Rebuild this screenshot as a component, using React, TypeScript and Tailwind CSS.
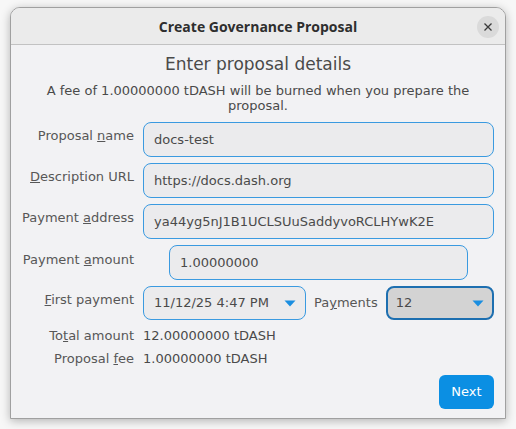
import React from "react";

const font = { fontFamily: '"DejaVu Sans", "Liberation Sans", sans-serif' };

function Caret() {
  return (
    <svg width="12" height="7" viewBox="0 0 12 7" className="shrink-0">
      <path d="M0.5 0.5 L11.5 0.5 L6 6.5 Z" fill="#1a8ee0" />
    </svg>
  );
}

function Label({ children, className = "" }: { children: React.ReactNode; className?: string }) {
  return (
    <div className={"text-right whitespace-nowrap text-[13px] leading-4 text-[#575757] pt-[6px] " + className}>
      {children}
    </div>
  );
}

function Field({ value, className = "" }: { value: string; className?: string }) {
  return (
    <div
      className={
        "h-[35px] flex items-center rounded-[8px] border border-[#3a9ae0] bg-[#ebebed] px-[10px] text-[13px] leading-4 text-[#4a4a4a] " +
        className
      }
    >
      {value}
    </div>
  );
}

export default function App() {
  return (
    <div className="w-[516px] h-[429px] bg-[#f7f7f7] pt-[7px] pl-[10px]" style={font}>
      <div className="w-[496px] h-[412px] flex flex-col rounded-t-[10px] border border-[#a0a0a0] bg-[#f2f2f4] shadow-[0_2px_10px_rgba(0,0,0,0.28)] overflow-hidden">
        <div className="relative h-[37px] shrink-0 flex items-center justify-center border-b border-[#c2c2c2] bg-[#ebebeb]">
          <span className="text-[14px] font-bold text-[#2e2e2e]" style={{ fontFamily: '"Open Sans", "DejaVu Sans", sans-serif' }}>
            Create Governance Proposal
          </span>
          <div className="absolute right-[6px] top-[8px] w-[22px] h-[22px] rounded-full bg-[#dadada] flex items-center justify-center">
            <svg width="10" height="10" viewBox="0 0 10 10">
              <path d="M1.5 1.5 L8.5 8.5 M8.5 1.5 L1.5 8.5" stroke="#3a3a3a" strokeWidth="1.3" />
            </svg>
          </div>
        </div>

        <div className="flex-1 flex flex-col px-[11px]">
          <div className="text-center text-[17px] leading-6 text-[#4a4a4a] mt-[7px]">Enter proposal details</div>
          <div className="text-center text-[13px] leading-[15px] text-[#4a4a4a] mt-[7px] px-[20px]">
            A fee of 1.00000000 tDASH will be burned when you prepare the proposal.
          </div>

          <div className="grid grid-cols-[112px_1fr] gap-x-[9px] gap-y-[6px] mt-[9px]">
            <Label>
              Proposal <u>n</u>ame
            </Label>
            <Field value="docs-test" />

            <Label>
              <u>D</u>escription URL
            </Label>
            <Field value="https://docs.dash.org" />

            <Label>
              Payment <u>a</u>ddress
            </Label>
            <Field value="ya44yg5nJ1B1UCLSUuSaddyvoRCLHYwK2E" />

            <Label className="pt-[7px]">
              Payment <u>a</u>mount
            </Label>
            <Field value="1.00000000" className="ml-[26px] mr-[26px]" />

            <Label className="pt-[6px]">
              <u>F</u>irst payment
            </Label>
            <div className="flex items-center">
              <div className="w-[163px] h-[34px] flex items-center justify-between rounded-[8px] border border-[#3a9ae0] bg-[#ebebed] pl-[10px] pr-[9px] text-[13px] text-[#4a4a4a]">
                <span>11/12/25 4:47 PM</span>
                <Caret />
              </div>
              <span className="ml-[8px] text-[13px] text-[#575757]">
                Pa<u>y</u>ments
              </span>
              <div className="ml-[8px] flex-1 h-[34px] flex items-center justify-between rounded-[8px] border-2 border-[#1d6fb0] bg-[#d3d3d3] pl-[8px] pr-[8px] text-[13px] text-[#4a4a4a]">
                <span>12</span>
                <Caret />
              </div>
            </div>
          </div>

          <div className="grid grid-cols-[112px_1fr] gap-x-[9px] gap-y-[7px] mt-[8px] text-[13px] leading-4">
            <div className="text-right text-[#575757]">
              To<u>t</u>al amount
            </div>
            <div className="text-[#4a4a4a]">12.00000000 tDASH</div>
            <div className="text-right text-[#575757]">
              Proposal <u>f</u>ee
            </div>
            <div className="text-[#4a4a4a]">1.00000000 tDASH</div>
          </div>

          <div className="flex justify-end mt-[8px]">
            <div className="w-[55px] h-[34px] rounded-[6px] bg-[#0b8fe3] flex items-center justify-center text-[13px] text-white">
              Next
            </div>
          </div>
        </div>
      </div>
    </div>
  );
}
